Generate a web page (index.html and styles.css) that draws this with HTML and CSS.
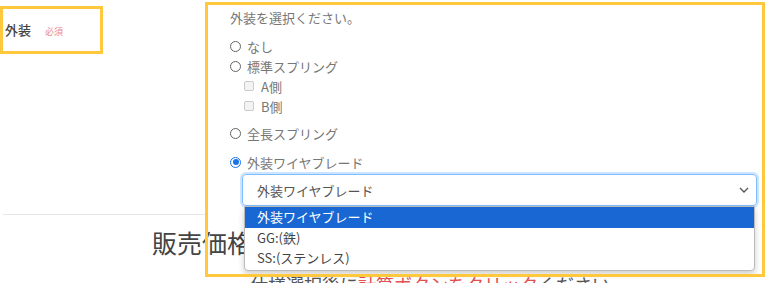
FILE: index.html
```html
<!DOCTYPE html>
<html lang="ja">

<head>
	<meta charset="UTF-8">
	<title>外装</title>
	<link rel="stylesheet" href="styles.css">
</head>

<body>
	<div class="form-row">
		<div class="label-col">
			<span class="label">外装</span><span class="req">必須</span>
		</div>
		<div class="field-col">
			<p class="hint">外装を選択ください。</p>
			<ul class="options">
				<li><span class="radio"></span>なし</li>
				<li><span class="radio"></span>標準スプリング</li>
				<li class="sub"><span class="check"></span>A側</li>
				<li class="sub"><span class="check"></span>B側</li>
				<li class="gap1"><span class="radio"></span>全長スプリング</li>
				<li class="gap2"><span class="radio on"></span>外装ワイヤブレード</li>
			</ul>
			<div class="select">
				<span>外装ワイヤブレード</span>
				<svg width="10" height="6" viewBox="0 0 10 6"><path d="M1 1l4 4 4-4" fill="none" stroke="#555" stroke-width="1.3"/></svg>
				<ul class="dropdown">
					<li class="active">外装ワイヤブレード</li>
					<li>GG:(鉄)</li>
					<li>SS:(ステンレス)</li>
				</ul>
			</div>
		</div>
	</div>
	<hr class="line">
	<div class="price">
		<h2>販売価格</h2>
		<p class="note">仕様選択後に<span class="red">計算ボタンをクリック</span>ください</p>
	</div>

	<!-- 注釈の枠 -->
	<div class="mark mark-label"></div>
	<div class="mark mark-field"></div>
</body>

</html>
```

FILE: styles.css
```css
html {
	font-family: "Noto Sans CJK JP", "Noto Sans", sans-serif;
	font-size: 13px;
}

body {
	margin: 0;
	background-color: #FFF;
	color: #777;
	position: relative;
	height: 283px;
	overflow: hidden;
}

.form-row {
	display: flex;
}

.label-col {
	width: 225px;
	padding: 20px 0 0 5px;
	line-height: 20px;
	box-sizing: border-box;
}

.label {
	color: #444;
	font-weight: 500;
}

.req {
	margin-left: 14px;
	font-size: 9px;
	color: #e88;
}

.field-col {
	flex: 1;
	padding: 8px 11px 0 5px;
}

.hint {
	margin: 0;
	line-height: 20px;
}

.options {
	list-style: none;
	margin: 8px 0 0;
	padding: 0;
}

.options li {
	display: flex;
	align-items: center;
	height: 20px;
}

.options li.sub {
	padding-left: 14px;
}

.options li.gap1 {
	margin-top: 7px;
}

.options li.gap2 {
	margin-top: 9px;
}

.radio {
	width: 9px;
	height: 9px;
	border: 1.5px solid #666;
	border-radius: 50%;
	margin-right: 6px;
	position: relative;
}

.radio.on {
	border-color: #1a73e8;
}

.radio.on::after {
	content: "";
	position: absolute;
	left: 1.5px;
	top: 1.5px;
	width: 6px;
	height: 6px;
	border-radius: 50%;
	background-color: #1a73e8;
}

.check {
	width: 8px;
	height: 8px;
	border: 1px solid #ccc;
	background-color: #f3f3f3;
	border-radius: 2px;
	margin-right: 7px;
}

.select {
	position: relative;
	display: flex;
	align-items: center;
	justify-content: space-between;
	margin: 2px 0 0 12px;
	height: 32px;
	padding: 0 7px 0 14px;
	border: 1px solid #80bdff;
	border-radius: 4px;
	box-sizing: border-box;
	box-shadow: 0 0 0 2px rgba(0, 123, 255, .2);
	color: #555;
	font-size: 13px;
}

.dropdown {
	position: absolute;
	left: 1px;
	right: 1px;
	top: 31px;
	margin: 0;
	padding: 0 0 2px;
	list-style: none;
	background-color: #FFF;
	border: 1px solid #bbb;
	border-radius: 0 0 4px 4px;
	box-shadow: 0 3px 6px rgba(0, 0, 0, .2);
	z-index: 2;
}

.dropdown li {
	height: 20px;
	line-height: 20px;
	padding-left: 12px;
	color: #444;
}

.dropdown li.active {
	height: 21px;
	background-color: #1967d2;
	color: #FFF;
}

.line {
	margin: 8px 563px 0 3px;
	border: 0;
	border-top: 1px solid #e6e6e6;
}

.price {
	padding-left: 152px;
}

.price h2 {
	margin: 12px 0 0;
	font-size: 25px;
	font-weight: normal;
	line-height: 30px;
	color: #444;
}

.note {
	margin: 15px 0 0 98px;
	font-size: 18px;
	line-height: 24px;
	color: #555;
}

.red {
	color: #e05050;
}

.mark {
	position: absolute;
	border: 3px solid #ffc83d;
	z-index: 3;
}

.mark-label {
	left: 0;
	top: 6px;
	width: 97px;
	height: 42px;
}

.mark-field {
	left: 205px;
	top: 2px;
	width: 554px;
	height: 269px;
}
```
